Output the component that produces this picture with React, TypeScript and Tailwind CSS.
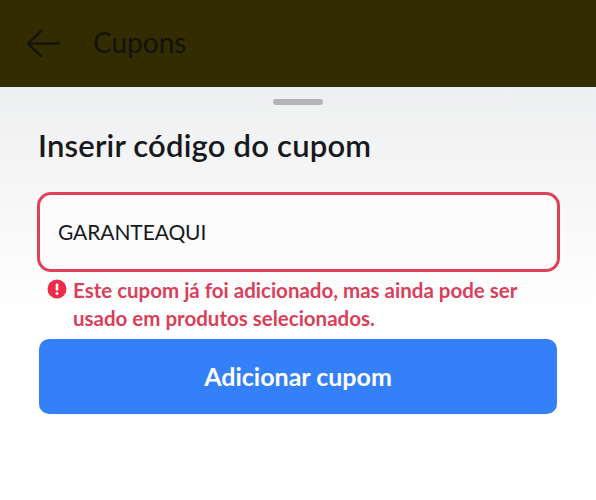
function BackArrow() {
  return (
    <svg width="36" height="32" viewBox="0 0 36 32" fill="none" stroke="#14120a" strokeWidth="2.2">
      <path d="M16 2 L2 15.5 L16 29" />
      <path d="M2 15.5 H34" />
    </svg>
  );
}

function ErrorIcon() {
  return (
    <svg className="mt-[3px] shrink-0" width="20" height="20" viewBox="0 0 20 20">
      <circle cx="10" cy="10" r="9.5" fill="#ee2c4a" />
      <rect x="8.7" y="4.4" width="2.6" height="7.4" rx="1.3" fill="#fff" />
      <circle cx="10" cy="14.4" r="1.5" fill="#fff" />
    </svg>
  );
}

export default function App() {
  return (
    <div className="flex h-[500px] w-[596px] flex-col overflow-hidden bg-white font-['Lato','Liberation_Sans',sans-serif]">
      <header className="flex h-[87px] shrink-0 items-center bg-[#332c00] pl-[26px]">
        <BackArrow />
        <span className="-mt-[4px] ml-[31px] text-[28px] text-[#14120a]">Cupons</span>
      </header>

      <main className="flex flex-1 flex-col bg-gradient-to-b from-[#eeeff0] to-white to-[55%] px-[37px]">
        <div className="mt-[12px] h-[6px] w-[50px] self-center rounded-full bg-[#b4b4b6]" />
        <h1 className="mt-[22px] ml-px text-[31px] leading-[36px] font-semibold tracking-[0.2px] text-[#17181c]">
          Inserir código do cupom
        </h1>

        <div className="mt-[29px] -mr-px flex h-[80px] items-center rounded-[14px] border-[3px] border-[#e0405a] bg-[#fbfbfb] pl-[18px] text-[21px] tracking-[-0.1px] text-[#17181c]">
          GARANTEAQUI
        </div>

        <div className="mt-[4px] flex gap-[6px] pl-[10px]">
          <ErrorIcon />
          <p className="text-[20.5px] leading-[28px] font-bold text-[#d9405a]">
            Este cupom já foi adicionado, mas ainda pode ser
            <br />
            usado em produtos selecionados.
          </p>
        </div>

        <button className="mt-[7px] ml-[2px] h-[75px] w-[518px] rounded-[10px] bg-[#3380f8] text-[25px] font-bold text-white">
          Adicionar cupom
        </button>
      </main>
    </div>
  );
}
